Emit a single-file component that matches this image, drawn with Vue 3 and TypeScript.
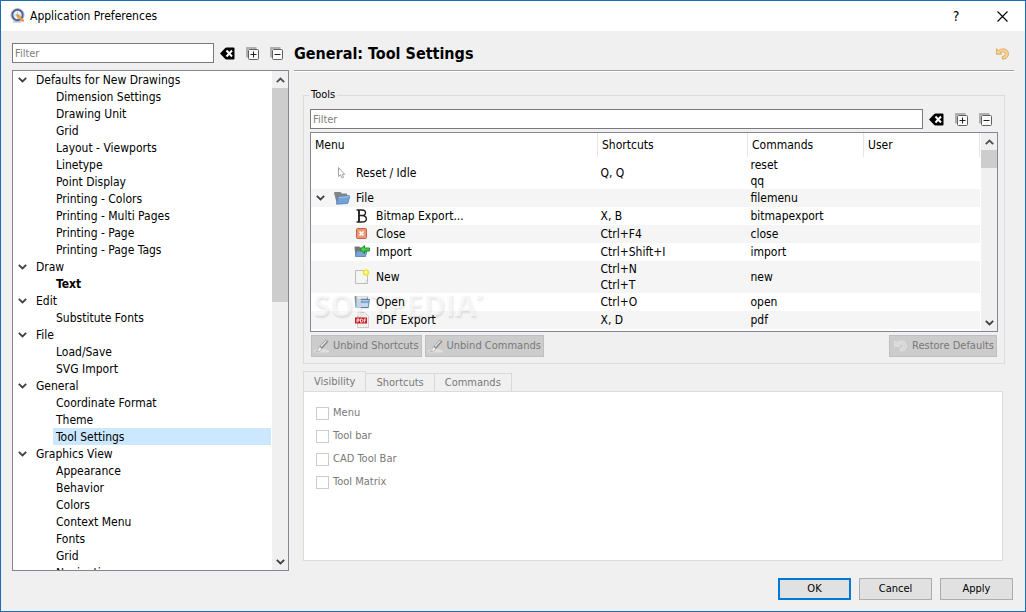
<script setup lang="ts">
import { ref } from 'vue'

interface Section { name: string; pages: string[] }
interface ToolRow {
  name: string
  icon: string
  level: number
  expandable?: boolean
  shortcuts: string[]
  commands: string[]
}

const sections: Section[] = [
  {
    name: 'Defaults for New Drawings',
    pages: ['Dimension Settings', 'Drawing Unit', 'Grid', 'Layout - Viewports', 'Linetype', 'Point Display',
      'Printing - Colors', 'Printing - Multi Pages', 'Printing - Page', 'Printing - Page Tags'],
  },
  { name: 'Draw', pages: ['Text'] },
  { name: 'Edit', pages: ['Substitute Fonts'] },
  { name: 'File', pages: ['Load/Save', 'SVG Import'] },
  { name: 'General', pages: ['Coordinate Format', 'Theme', 'Tool Settings'] },
  { name: 'Graphics View', pages: ['Appearance', 'Behavior', 'Colors', 'Context Menu', 'Fonts', 'Grid', 'Navigation'] },
]

const tools: ToolRow[] = [
  { name: 'Reset / Idle', icon: 'cursor', level: 0, shortcuts: ['Q, Q'], commands: ['reset', 'qq'] },
  { name: 'File', icon: 'folder', level: 0, expandable: true, shortcuts: [], commands: ['filemenu'] },
  { name: 'Bitmap Export...', icon: 'bitmap', level: 1, shortcuts: ['X, B'], commands: ['bitmapexport'] },
  { name: 'Close', icon: 'close', level: 1, shortcuts: ['Ctrl+F4'], commands: ['close'] },
  { name: 'Import', icon: 'import', level: 1, shortcuts: ['Ctrl+Shift+I'], commands: ['import'] },
  { name: 'New', icon: 'new', level: 1, shortcuts: ['Ctrl+N', 'Ctrl+T'], commands: ['new'] },
  { name: 'Open', icon: 'open', level: 1, shortcuts: ['Ctrl+O'], commands: ['open'] },
  { name: 'PDF Export', icon: 'pdf', level: 1, shortcuts: ['X, D'], commands: ['pdf'] },
]

const tabs = ['Visibility', 'Shortcuts', 'Commands']
const places = ['Menu', 'Tool bar', 'CAD Tool Bar', 'Tool Matrix']

const selected = ref('General/Tool Settings')
const activeTab = ref('Visibility')
const pageFilter = ref('')
const toolFilter = ref('')
</script>

<template>
  <div class="window">
    <svg class="defs" width="0" height="0" aria-hidden="true">
      <symbol id="i-clear" viewBox="0 0 15 13">
        <path d="M0 6.5 5 1.2Q5.600 .5 6.500.5H13.500Q14.500.5 14.500 1.500V11.500Q14.500 12.500 13.500 12.500H6.500Q5.600 12.500 5 11.800Z" fill="#000" />
        <path d="M6.500 3.500 12 9.500M12 3.500 6.500 9.500" stroke="#fff" stroke-width="2" />
      </symbol>
      <symbol id="i-plus" viewBox="0 0 13 13">
        <path d="M1 10.500V1H10.500" fill="none" stroke="#b0b0b0" stroke-width="2" />
        <rect x="2.500" y="2.500" width="10" height="10" rx="1" fill="#fafafa" stroke="#606060" />
        <path d="M4.500 7.500h6M7.500 4.500v6" stroke="#222" />
      </symbol>
      <symbol id="i-minus" viewBox="0 0 13 13">
        <path d="M1 10.500V1H10.500" fill="none" stroke="#b0b0b0" stroke-width="2" />
        <rect x="2.500" y="2.500" width="10" height="10" rx="1" fill="#fafafa" stroke="#606060" />
        <path d="M4.500 7.500h6" stroke="#222" />
      </symbol>
      <symbol id="i-down" viewBox="0 0 9 6">
        <path d="M.8 .8 4.500 4.400 8.200 .8" fill="none" stroke="#404040" stroke-width="1.800" />
      </symbol>
      <symbol id="i-up" viewBox="0 0 9 6">
        <path d="M.8 5.200 4.500 1.500 8.200 5.200" fill="none" stroke="#505050" stroke-width="1.800" />
      </symbol>
      <symbol id="i-undo" viewBox="0 0 13 12">
        <path class="arc" d="M.6 .8V6.200H5.600L4.200 4.300Q9.500 2.600 9.300 6.200Q9.100 8.200 6.300 8.600V11.200Q12.400 10.800 12.400 5.800Q12 .7 6.500 .9Q4.300 1.100 2.600 2.600Z" fill="currentColor" stroke="var(--edge)" stroke-width=".9" />
      </symbol>
      <symbol id="i-brush" viewBox="0 0 16 16">
        <path d="M0 12.500 6 9.500 15 12.500V14.500H0Z" fill="#dedede" />
        <path d="M5.500 8.500 12 1.500 14.500 3.500 8 11Z" fill="#8c8c8c" />
        <path d="M7 8.500 12.500 2.700" stroke="#eee" stroke-width="1.200" />
        <path d="M5.300 8.500 8 11Q6 14 2 13.500 4.200 12 5.300 8.500Z" fill="#f2f2f2" stroke="#999" stroke-width=".6" />
      </symbol>
      <symbol id="i-cursor" viewBox="0 0 16 16">
        <path d="M4.500 2.500V11.500L6.500 9.800 8 13 9.500 12.300 8.200 9.300H10.700Z" fill="#fff" stroke="#999" stroke-width=".9" />
      </symbol>
      <symbol id="i-folder" viewBox="0 0 16 16">
        <path d="M0 3Q0 2 1 2H6.500L8 3.500H13V12L3 14Z" fill="#858585" />
        <path d="M4 6.500 14.500 5.500Q15.700 5.500 15.600 6.500L14 12.800Q13.800 13.500 13 13.500L2.500 14.200Z" fill="#74a2d6" stroke="#4b7db6" stroke-width=".8" />
        <path d="M5 7.500 14.300 6.700" stroke="#a7c8ea" />
      </symbol>
      <symbol id="i-bitmap" viewBox="0 0 16 16">
        <path d="M2.500 2H8Q11.500 2 11.500 4.800 11.500 7.500 8 7.500H5M8 7.500Q12.400 7.800 12.400 11 12.400 14 8 14H2.500" fill="none" stroke="#222" stroke-width="1.400" />
        <path d="M5 2V14" stroke="#222" stroke-width="1.900" />
      </symbol>
      <symbol id="i-close" viewBox="0 0 16 16">
        <rect x="2.500" y="2.500" width="10" height="10" rx="1" fill="#e99a7c" stroke="#cf5d42" />
        <path d="M5.500 5.500 9.500 9.500M9.500 5.500 5.500 9.500" stroke="#fff" stroke-width="1.700" />
      </symbol>
      <symbol id="i-import" viewBox="0 0 16 16">
        <path d="M.5 3.500Q.5 2.500 1.500 2.500H5L6.500 3.500H11V12H1.500Z" fill="#777" />
        <path d="M2.500 7H13L11.500 12.500H1.500Z" fill="#7ca5d2" stroke="#527eaf" stroke-width=".8" />
        <path d="M6 5.500 10.500 1.500V4H15.500V7H10.500V9.500Z" fill="#45d145" stroke="#188a22" stroke-width=".9" />
      </symbol>
      <symbol id="i-new" viewBox="0 0 16 16">
        <path d="M1.500 1.500H13.500V14.500H1.500Z" fill="#f5f5f3" stroke="#bcbcb8" />
        <path d="M13 11 10.500 14" stroke="#d5d5d2" stroke-width=".8" />
        <circle cx="12" cy="3.500" r="3.300" fill="#f1e638" />
        <circle cx="12" cy="3.500" r="1.400" fill="#fffdd0" />
      </symbol>
      <symbol id="i-open" viewBox="0 0 16 16">
        <path d="M.5 3Q.5 2 1.500 2H14V13H1.500Z" fill="#8d8d8d" />
        <path d="M3.500 2.500H13V7H3.500Z" fill="#e5e5e5" />
        <path d="M3 5.500H15.500L14.300 13.500H2Z" fill="#7ea9d8" stroke="#4d7eb3" stroke-width=".8" />
        <path d="M4 6.500H14.500" stroke="#b4d0ee" />
      </symbol>
      <symbol id="i-pdf" viewBox="0 0 16 16">
        <path d="M3.500.5H10.500L14.500 4.500V15.500H3.500Z" fill="#f0f0f0" stroke="#ccc" />
        <rect x="1" y="5.500" width="12" height="6" fill="#c8161d" />
        <path d="M3 10.500V7H5V9H3M6.500 10.200V7H7.500Q8.800 7 8.800 8.600 8.800 10.200 7.500 10.200ZM10.300 10.500V7H12M10.300 8.700H11.700" fill="none" stroke="#fff" stroke-width=".9" />
      </symbol>
    </svg>

    <header class="titlebar">
      <svg class="logo" viewBox="0 0 16 16" width="16" height="16" aria-hidden="true">
        <circle cx="7.500" cy="7" r="5.200" fill="#eef1f6" stroke="#4a5e90" stroke-width="2" />
        <circle cx="7.500" cy="7" r="6.500" fill="none" stroke="#98a3bd" stroke-width=".8" />
        <path d="M7.500 3.500V10.500M4 7H11" stroke="#b9c2d4" stroke-width=".8" />
        <path d="M6.500 6.500 9 7.200 13.200 11.700 11.800 13.200 7.300 9Z" fill="#f2a63a" stroke="#b9793a" stroke-width=".5" />
        <path d="M11.800 13.200 13.200 11.700 14.200 13.500Z" fill="#c55" />
        <path d="M3 14H11" stroke="#a7b0c4" />
      </svg>
      <h1>Application Preferences</h1>
      <button class="caption-button" aria-label="Help">?</button>
      <button class="caption-button" aria-label="Close window">
        <svg viewBox="0 0 11 11" width="11" height="11"><path d="M.5.5 10.500 10.500M10.500.5.5 10.500" stroke="#000" stroke-width="1.100" /></svg>
      </button>
    </header>

    <div class="body">
      <main class="columns">
        <nav class="sidebar" aria-label="Preference pages">
          <div class="filter-row">
            <input v-model="pageFilter" class="field" type="text" placeholder="Filter" aria-label="Filter pages">
            <div class="filter-tools">
              <button class="icon-button" aria-label="Clear filter"><svg width="15" height="13"><use href="#i-clear" /></svg></button>
              <button class="icon-button" aria-label="Expand all"><svg width="13" height="13"><use href="#i-plus" /></svg></button>
              <button class="icon-button" aria-label="Collapse all"><svg width="13" height="13"><use href="#i-minus" /></svg></button>
            </div>
          </div>
          <div class="tree-box">
            <ul class="tree">
              <li v-for="section in sections" :key="section.name">
                <button class="section">
                  <svg width="9" height="6"><use href="#i-down" /></svg>{{ section.name }}
                </button>
                <ul>
                  <li v-for="page in section.pages" :key="page">
                    <button
                      class="page"
                      :class="{ current: selected === section.name + '/' + page, strong: page === 'Text' }"
                      @click="selected = section.name + '/' + page"
                    >{{ page }}</button>
                  </li>
                </ul>
              </li>
            </ul>
            <div class="scrollbar" aria-hidden="true">
              <span class="arrow"><svg width="9" height="6"><use href="#i-up" /></svg></span>
              <span class="track"><span class="thumb pages-thumb"></span></span>
              <span class="arrow"><svg width="9" height="6"><use href="#i-down" /></svg></span>
            </div>
          </div>
        </nav>

        <section class="content">
          <div class="heading">
            <h2>General: Tool Settings</h2>
            <button class="icon-button reset" aria-label="Reset page"><svg width="13" height="12"><use href="#i-undo" /></svg></button>
          </div>

          <fieldset class="group">
            <legend>Tools</legend>
            <div class="filter-row">
              <input v-model="toolFilter" class="field" type="text" placeholder="Filter" aria-label="Filter tools">
              <div class="filter-tools">
                <button class="icon-button" aria-label="Clear tool filter"><svg width="15" height="13"><use href="#i-clear" /></svg></button>
                <button class="icon-button" aria-label="Expand all tools"><svg width="13" height="13"><use href="#i-plus" /></svg></button>
                <button class="icon-button" aria-label="Collapse all tools"><svg width="13" height="13"><use href="#i-minus" /></svg></button>
              </div>
            </div>

            <div class="table-box">
              <div class="table-view">
                <table>
                  <colgroup><col><col class="col-keys"><col class="col-text"><col class="col-text"></colgroup>
                  <thead>
                    <tr><th>Menu</th><th>Shortcuts</th><th>Commands</th><th>User</th></tr>
                  </thead>
                  <tbody>
                    <tr v-for="tool in tools" :key="tool.name">
                      <td>
                        <div class="tool" :class="{ child: tool.level === 1 }">
                          <span class="expander"><svg v-if="tool.expandable" width="9" height="6"><use href="#i-down" /></svg></span>
                          <svg width="16" height="16"><use :href="'#i-' + tool.icon" /></svg>
                          <span class="tool-name">{{ tool.name }}</span>
                        </div>
                      </td>
                      <td><div v-for="keys in tool.shortcuts" :key="keys">{{ keys }}</div></td>
                      <td><div v-for="command in tool.commands" :key="command">{{ command }}</div></td>
                      <td></td>
                    </tr>
                  </tbody>
                </table>
              </div>
              <div class="scrollbar" aria-hidden="true">
                <span class="arrow"><svg width="9" height="6"><use href="#i-up" /></svg></span>
                <span class="track"><span class="thumb tools-thumb"></span></span>
                <span class="arrow"><svg width="9" height="6"><use href="#i-down" /></svg></span>
              </div>
              <div class="watermark" aria-hidden="true">SOFTPEDIA<sup>°</sup></div>
            </div>

            <div class="actions">
              <button class="action" disabled><svg width="16" height="16"><use href="#i-brush" /></svg>Unbind Shortcuts</button>
              <button class="action" disabled><svg width="16" height="16"><use href="#i-brush" /></svg>Unbind Commands</button>
              <button class="action restore" disabled><svg width="13" height="12"><use href="#i-undo" /></svg>Restore Defaults</button>
            </div>
          </fieldset>

          <div class="tabs">
            <div class="tab-strip" role="tablist">
              <button
                v-for="tab in tabs"
                :key="tab"
                class="tab"
                role="tab"
                :aria-selected="activeTab === tab"
                :class="{ active: activeTab === tab }"
                @click="activeTab = tab"
              >{{ tab }}</button>
            </div>
            <div class="tab-panel" role="tabpanel">
              <label v-for="place in places" :key="place"><input type="checkbox" disabled>{{ place }}</label>
            </div>
          </div>
        </section>
      </main>

      <footer class="footer">
        <button class="dialog-button default">OK</button>
        <button class="dialog-button">Cancel</button>
        <button class="dialog-button">Apply</button>
      </footer>
    </div>
  </div>
</template>

<style>
body { margin: 0; }
</style>

<style scoped>
* { box-sizing: border-box; }
.window {
  --ui: "DejaVu Sans Condensed", "Noto Sans", sans-serif;
  display: flex;
  flex-direction: column;
  height: 100vh;
  min-height: 560px;
  border: 1px solid #1a6fb4;
  background: #f0f0f0;
  color: #000;
  font: 12px/16px var(--ui);
}
.defs { position: absolute; }
svg { display: block; flex: none; }
button { padding: 0; border: 0; background: none; color: inherit; font: inherit; }
ul { margin: 0; padding: 0; list-style: none; }

.titlebar { display: flex; flex: none; align-items: center; height: 30px; padding: 0 0 0 9px; background: #fff; }
.titlebar h1 { flex: 1; margin: 0 0 0 4px; font-size: 12px; font-weight: 400; }
.caption-button { display: flex; align-items: center; justify-content: center; width: 46px; height: 30px; font-size: 14px; }

.body { display: flex; flex: 1; flex-direction: column; gap: 7px; min-height: 0; padding: 12px 11px 11px; }
.columns { display: flex; flex: 1; gap: 5px; min-height: 0; }

.sidebar { display: flex; flex: none; flex-direction: column; gap: 7px; width: 277px; }
.filter-row { display: flex; align-items: center; height: 20px; }
.field {
  flex: 1; min-width: 0; height: 20px; padding: 0 2px; border: 1px solid #7a7a7a; border-radius: 0;
  background: #fff; color: #000; font: 11px/16px var(--ui); outline: none;
}
.field::placeholder { color: #808080; opacity: 1; }
.filter-tools { display: flex; gap: 11px; padding: 0 6px; }
.icon-button { display: flex; align-items: center; }

.tree-box { display: flex; flex: 1; min-height: 0; border: 1px solid #828790; background: #fff; overflow: hidden; }
.tree { flex: 1; }
.section { display: flex; align-items: center; width: 100%; height: 17px; padding-left: 5px; gap: 9px; text-align: left; }
.page { display: block; width: calc(100% - 41px); height: 17px; margin-left: 40px; padding-left: 3px; text-align: left; }
.page.current { background: #cce8ff; }
.page.strong { font-weight: 700; }

.scrollbar { display: flex; flex: none; flex-direction: column; width: 16px; background: #f0f0f0; }
.arrow { display: flex; align-items: center; justify-content: center; height: 17px; }
.track { flex: 1; }
.thumb { display: block; background: #cdcdcd; }
.pages-thumb { height: 46%; }
.tools-thumb { height: 11%; }

.content { display: flex; flex: 1; flex-direction: column; min-width: 0; }
.heading { display: flex; flex: none; align-items: center; height: 29px; padding-bottom: 7px; border-bottom: 1px solid #fff; box-shadow: inset 0 -1px #a0a0a0; }
.heading h2 { flex: 1; margin: 0; font: 700 16px/20px var(--ui); }
.reset { --edge: #d9a050; margin-right: 5px; color: #fbd596; }

.group { min-width: 0; margin: 15px 9px 0; padding: 6px; border: 1px solid #dcdcdc; }
.group legend { padding: 0 2px; margin-left: -1px; font: 11px/16px var(--ui); }

.table-box { position: relative; display: flex; height: 200px; margin-top: 3px; border: 1px solid #828790; background: #fff; overflow: hidden; }
.table-view { flex: 1; min-width: 0; padding-right: 1px; overflow: hidden; }
table { width: 100%; table-layout: fixed; border-collapse: collapse; }
.col-keys { width: 150px; }
.col-text { width: 116px; }
th { height: 24px; padding: 0 4px; border-right: 1px solid #e5e5e5; font-weight: 400; text-align: left; }
td { height: 18px; padding: 0 3px; }
tbody tr:nth-child(even) { background: #f5f5f5; }
.tool { display: flex; align-items: center; gap: 6px; }
.tool.child { padding-left: 20px; }
.tool-name { position: relative; z-index: 1; }
.expander { width: 14px; padding-left: 2px; }

.watermark {
  position: absolute; left: 2px; bottom: 10px; color: rgba(255, 255, 255, .6);
  font: 700 30px/32px "Open Sans", sans-serif; text-shadow: 1px 2px 2px rgba(0, 0, 0, .1); pointer-events: none;
}
.watermark sup { font-size: 16px; line-height: 0; }

.actions { display: flex; gap: 3px; margin: 3px 1px 0; }
.action {
  display: flex; align-items: center; gap: 3px; height: 22px; padding: 0 2px; border: 1px solid #bfbfbf;
  background: #ccc; color: #787878; font: 11px/16px var(--ui);
}
.restore { --edge: #e2e2e2; gap: 5px; margin-left: auto; padding-left: 4px; }
.restore svg { color: #d8d8d8; }

.tabs { display: flex; flex: 1; flex-direction: column; min-height: 120px; margin: 7px 11px 10px 9px; color: #787878; font: 11px/16px var(--ui); }
.tab-strip { display: flex; flex: none; align-items: flex-end; height: 20px; }
.tab { height: 18px; padding: 0 10px; border: 1px solid #d9d9d9; border-width: 1px 1px 0 0; }
.tab.active { height: 20px; border-left-width: 1px; }
.tab-panel { display: flex; flex: 1; flex-direction: column; gap: 7px; padding: 13px 12px; border: 1px solid #dcdcdc; background: #fff; }
.tab-panel label { display: flex; align-items: center; gap: 4px; }
.tab-panel input { appearance: none; width: 13px; height: 13px; margin: 0; border: 1px solid #ccc; background: #fff; }

.footer { display: flex; flex: none; justify-content: flex-end; gap: 8px; padding-right: 1px; }
.dialog-button { width: 73px; height: 22px; border: 1px solid #adadad; background: #e1e1e1; font: 11px/16px var(--ui); }
.dialog-button.default { border: 2px solid #0078d7; }
</style>
